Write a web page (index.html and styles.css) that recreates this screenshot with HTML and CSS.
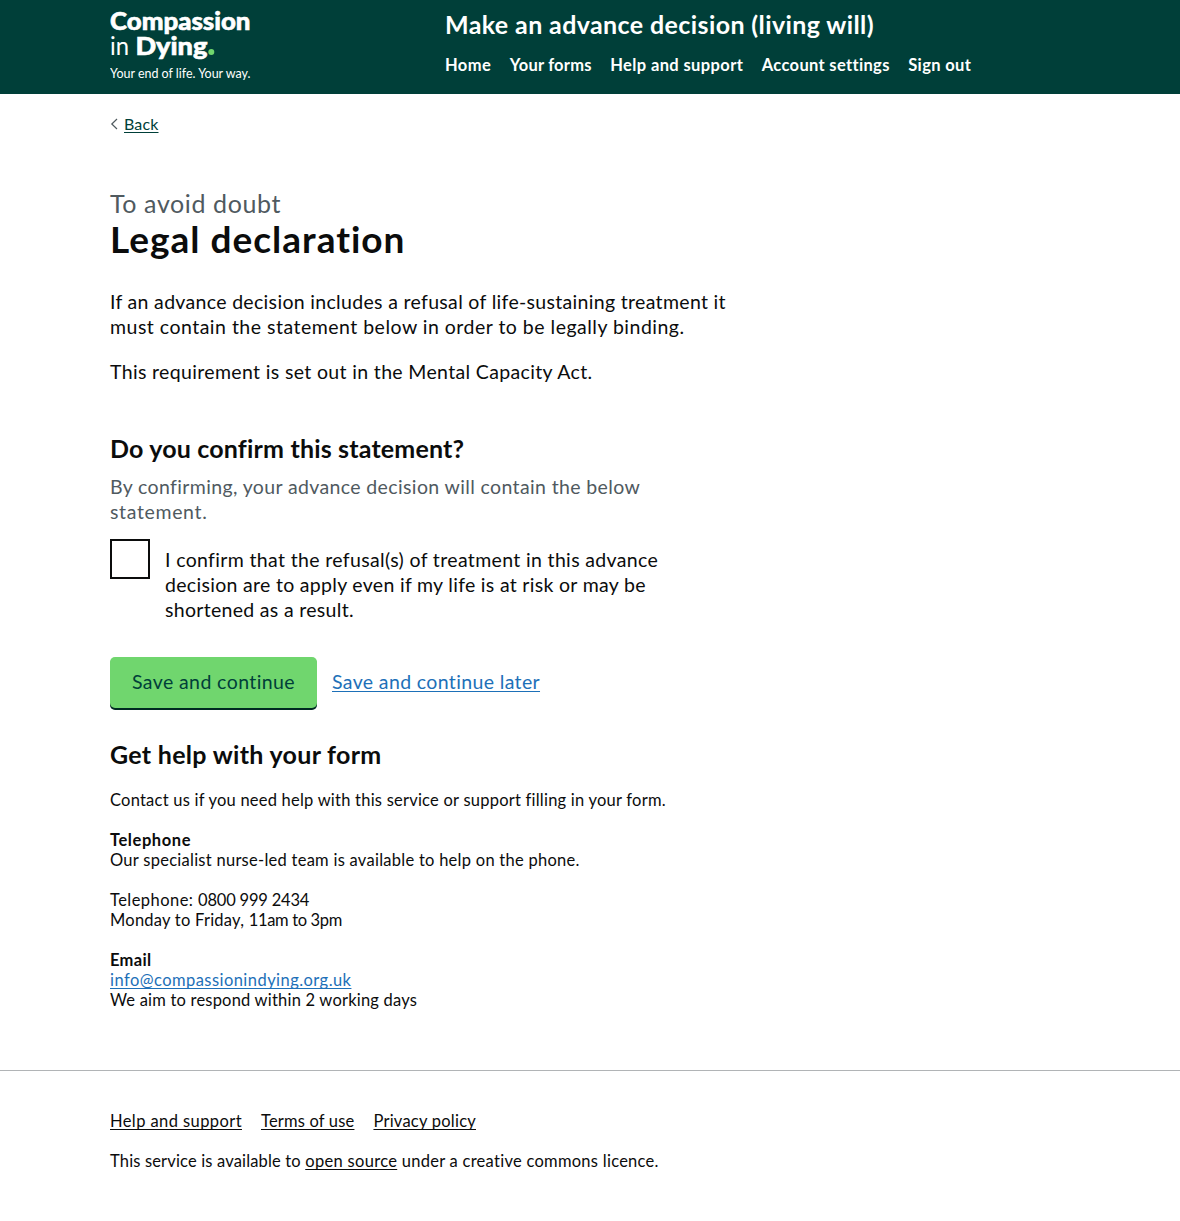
FILE: index.html
```
<!DOCTYPE html>
<html lang="en">
<head>
<meta charset="utf-8">
<title>Legal declaration</title>
<link rel="stylesheet" href="styles.css">
</head>
<body>
<header class="header">
  <div class="container header-inner">
    <a class="logo" href="#" aria-label="Compassion in Dying">
      <svg width="150" height="84" viewBox="0 0 150 84">
        <text class="logo-heavy" x="0" y="29.5" textLength="140.5" lengthAdjust="spacingAndGlyphs">Compassion</text>
        <text class="logo-light" x="0" y="54.5" textLength="19" lengthAdjust="spacingAndGlyphs">in</text>
        <text class="logo-heavy" x="25.5" y="54.5" textLength="72" lengthAdjust="spacingAndGlyphs">Dying</text>
        <circle class="logo-dot" cx="101.3" cy="52" r="3"/>
        <text class="logo-tagline" x="0" y="77.5" textLength="140.5" lengthAdjust="spacingAndGlyphs">Your end of life. Your way.</text>
      </svg>
    </a>
    <div class="header-content">
      <a class="service-name" href="#">Make an advance decision (living will)</a>
      <nav class="nav">
        <a class="nav-home" href="#">Home</a>
        <a class="nav-forms" href="#">Your forms</a>
        <a class="nav-help" href="#">Help and support</a>
        <a class="nav-account" href="#">Account settings</a>
        <a class="nav-out" href="#">Sign out</a>
      </nav>
    </div>
  </div>
</header>

<div class="container page">
  <div class="back">
    <svg width="8" height="12" viewBox="0 0 8 12"><path d="M7 1 1.8 6 7 11"/></svg>
    <a href="#">Back</a>
  </div>
  <main>
    <span class="caption">To avoid doubt</span>
    <h1>Legal declaration</h1>
    <p class="lead">If an advance decision includes a refusal of life-sustaining treatment it<br><span class="loose">must contain the statement below in order to be legally binding.</span></p>
    <p class="lead requirement">This requirement is set out in the Mental Capacity Act.</p>
    <form>
      <h2 class="question">Do you confirm this statement?</h2>
      <p class="hint">By confirming, your advance decision will contain the below<br><span class="looser">statement.</span></p>
      <label class="choice">
        <input type="checkbox">
        <span class="choice-text">I confirm that the refusal(s) of treatment in this advance<br><span class="tight">decision are to apply even if my life is at risk or may be<br>shortened as a result.</span></span>
      </label>
      <div class="actions">
        <button type="button" class="button">Save and continue</button>
        <a class="link later" href="#">Save and continue later</a>
      </div>
    </form>
    <section class="help">
      <h2>Get help with your form</h2>
      <p class="contact">Contact us if you need help with this service or support filling in your form.</p>
      <p class="team"><strong class="phone-title">Telephone</strong><br>Our specialist nurse-led team is available to help on the phone.</p>
      <p class="hours">Telephone: <span class="digits">0800 999 2434</span><br><span class="days">Monday to Friday, </span><span class="times">11am to 3pm</span></p>
      <p class="respond"><strong>Email</strong><br><a class="link email" href="#">info@compassionindying.org.uk</a><br>We aim to respond within 2 working days</p>
    </section>
  </main>
</div>

<footer class="footer">
  <div class="container">
    <div class="footer-links">
      <a class="foot-help" href="#">Help and support</a>
      <a class="foot-terms" href="#">Terms of use</a>
      <a class="foot-privacy" href="#">Privacy policy</a>
    </div>
    <p class="licence">This service is available to <a href="#">open source</a><span class="licence-end"> under a creative commons licence.</span></p>
  </div>
</footer>
</body>
</html>
```
FILE: styles.css
```
* { box-sizing: border-box; }
body { margin: 0; background: #fff; color: #0b0c0c; font: 400 16.5px/20px Lato, "Liberation Sans", sans-serif; }
h1, h2, p { margin: 0; }
strong { font-weight: 700; letter-spacing: .3px; }
.container { width: 960px; margin: 0 auto; }

.header { height: 94px; background: #003f39; color: #fff; }
.header a { color: inherit; text-decoration: none; white-space: nowrap; }
.header-inner { display: flex; }
.logo { width: 335px; height: 84px; }
.logo svg { display: block; fill: #fff; }
.logo-heavy { font-size: 25px; font-weight: 900; stroke: #fff; stroke-width: .6px; }
.logo-light { font-size: 25px; }
.logo-tagline { font-size: 12.5px; }
.logo-dot { fill: #70d66e; }
.header-content { padding-top: 10px; }
.service-name { display: block; font-size: 25px; font-weight: 700; line-height: 28px; padding-bottom: 2px; letter-spacing: .39px; }
.nav { display: flex; gap: 18.5px; margin-top: 15px; font-weight: 700; }
.nav-home { letter-spacing: .4px; }
.nav-forms { letter-spacing: .22px; }
.nav-help { letter-spacing: .385px; }
.nav-account { letter-spacing: .33px; }
.nav-out { letter-spacing: .36px; }

.page { height: 976px; padding-top: 20px; }
.back { display: flex; align-items: center; gap: 6px; height: 20px; }
.back svg { fill: none; stroke: #505a5f; stroke-width: 1.2; }
.back a { color: #003f39; font-size: 16px; letter-spacing: .14px; }
a { text-decoration-thickness: 1px; text-underline-offset: 2px; text-decoration-skip-ink: none; }

main { padding-top: 55px; }
.caption { display: block; color: #505a5f; font-size: 25px; line-height: 28px; padding-bottom: 2px; letter-spacing: .61px; }
h1 { font-size: 37px; font-weight: 700; line-height: 40px; letter-spacing: 1px; margin-bottom: 30px; }
h2 { font-size: 25px; font-weight: 700; line-height: 28px; padding-bottom: 2px; letter-spacing: .18px; }
.lead, .hint, .choice { font-size: 19.5px; line-height: 25px; letter-spacing: .32px; white-space: nowrap; }
.loose { letter-spacing: .49px; }
.requirement { margin-top: 20px; letter-spacing: .345px; }
.question { margin-top: 50px; }
.hint { margin-top: 10px; color: #505a5f; letter-spacing: .37px; }
.looser { letter-spacing: .65px; }
.choice { display: flex; gap: 15px; margin-top: 15px; letter-spacing: .35px; }
.choice input { appearance: none; flex: none; width: 40px; height: 40px; margin: 0; border: 2px solid #0b0c0c; background: #fff; }
.choice-text { padding-top: 8px; }
.tight { letter-spacing: .305px; }

.actions { display: flex; gap: 15px; align-items: center; height: 51px; margin-top: 35px; font-size: 19.5px; }
.button { width: 207px; height: 51px; padding: 0 0 2px; border: 0; border-radius: 5px; background: #70d66e; box-shadow: 0 2px 0 #002b22; color: #003f39; font: inherit; letter-spacing: .41px; }
.link { color: #1d70b8; }
.later { letter-spacing: .364px; padding-bottom: 2px; }

.help { margin-top: 32px; white-space: nowrap; }
.help h2 { letter-spacing: .3px; }
.help p { margin-top: 20px; }
.contact { letter-spacing: .226px; }
.team { letter-spacing: .266px; }
.phone-title { letter-spacing: .57px; }
.hours { letter-spacing: .45px; }
.digits { letter-spacing: -.2px; }
.days { letter-spacing: .24px; }
.times { letter-spacing: -.33px; }
.respond { letter-spacing: .203px; }
.email { letter-spacing: .45px; }

.footer { height: 151px; padding-top: 40px; border-top: 1px solid #b1b4b6; }
.footer a { color: inherit; }
.footer-links { display: flex; gap: 19px; }
.foot-help { letter-spacing: .41px; }
.foot-terms { letter-spacing: .18px; }
.foot-privacy { letter-spacing: .23px; }
.licence { margin-top: 20px; letter-spacing: .16px; }
.licence a { letter-spacing: .31px; }
.licence-end { letter-spacing: .27px; }
```
